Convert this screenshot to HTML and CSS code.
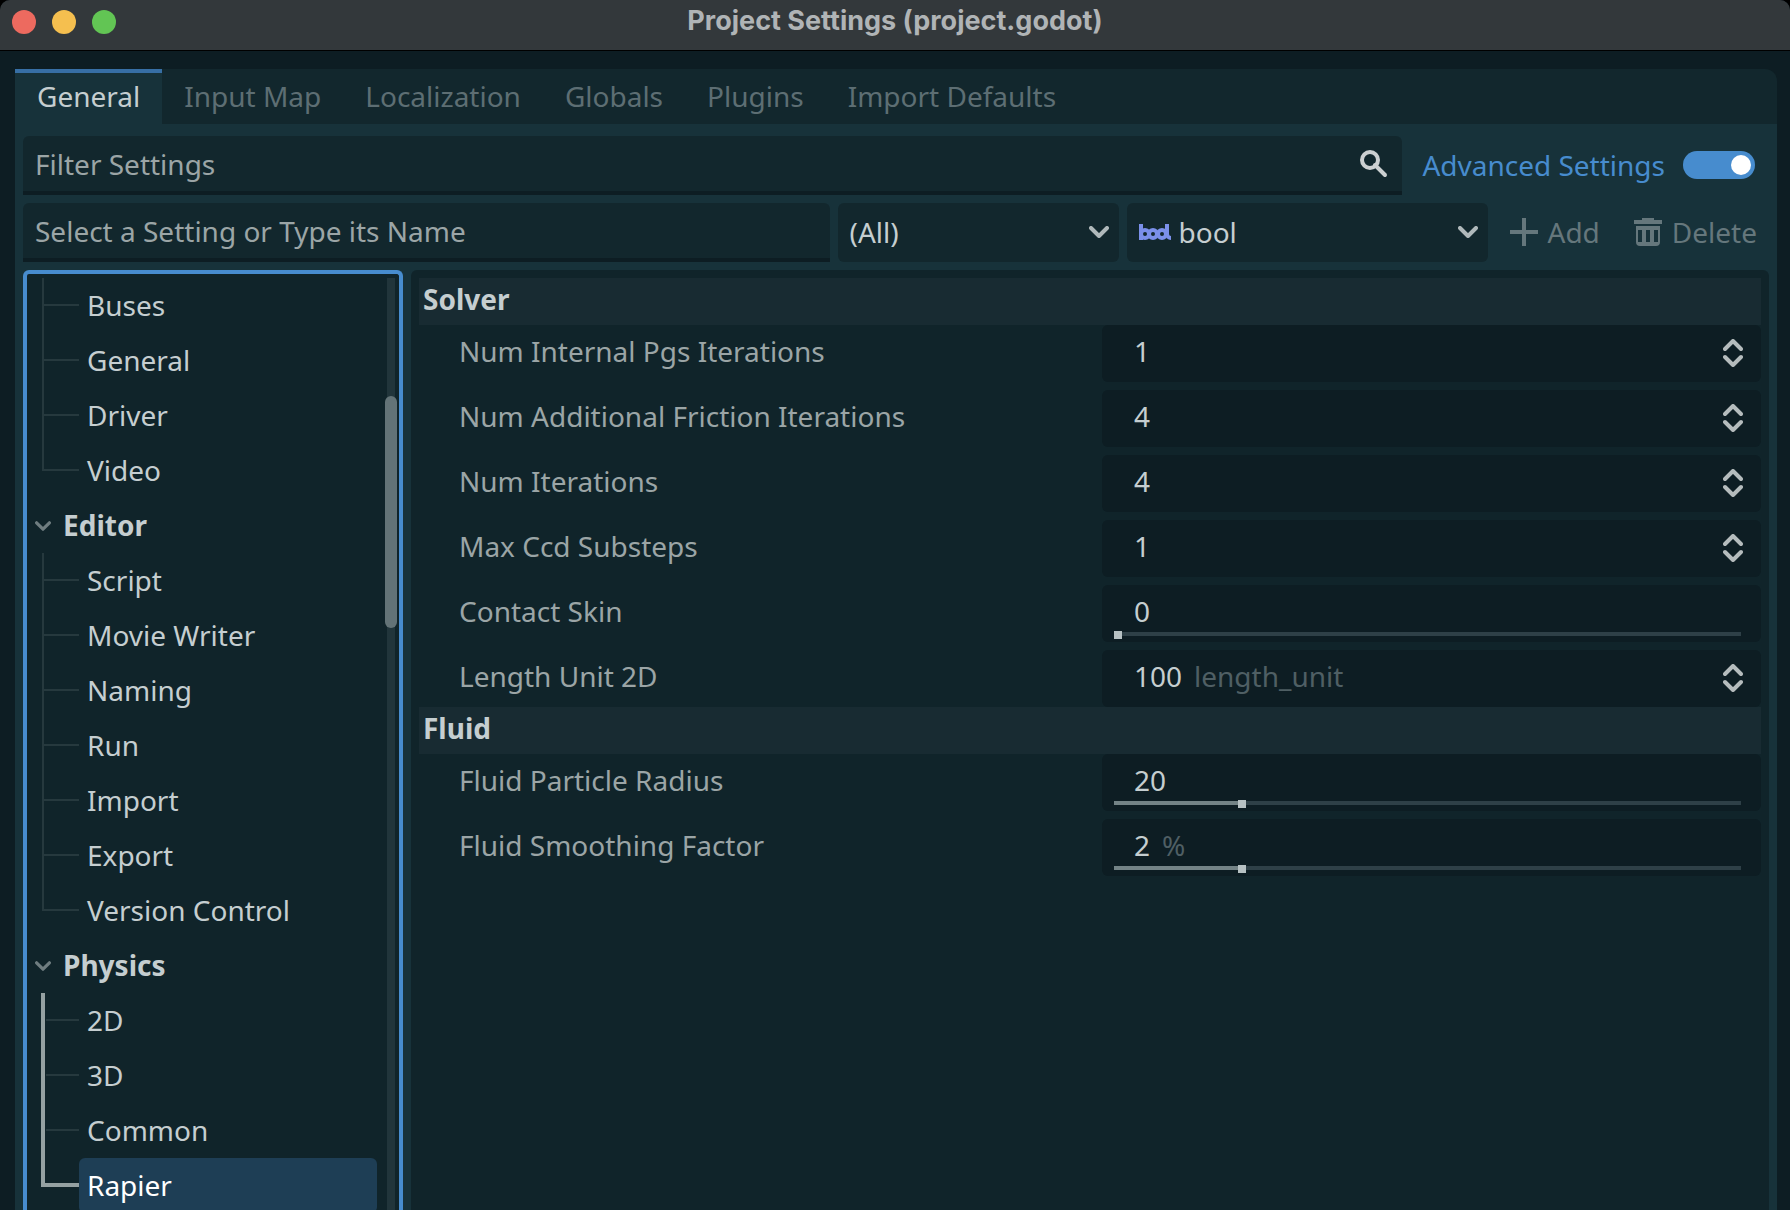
FILE: index.html
```html
<!DOCTYPE html>
<html lang="en">
<head>
<meta charset="utf-8">
<title>Project Settings (project.godot)</title>
<link rel="stylesheet" href="styles.css">
</head>
<body>
<svg class="sprite" aria-hidden="true">
  <symbol id="chevron" viewBox="0 0 20 12"><path d="M2 2l8 8 8-8" fill="none" stroke="currentColor" stroke-width="4" stroke-linecap="round" stroke-linejoin="round"/></symbol>
  <symbol id="updown" viewBox="0 0 20 28"><path d="M2 10l8-8 8 8M2 18l8 8 8-8" fill="none" stroke="currentColor" stroke-width="4" stroke-linecap="round" stroke-linejoin="round"/></symbol>
</svg>
<div class="window">
  <header class="titlebar">
    <div class="lights">
      <button class="light close" aria-label="Close"></button>
      <button class="light minimize" aria-label="Minimize"></button>
      <button class="light maximize" aria-label="Zoom"></button>
    </div>
    <h1 class="title">Project Settings (project.godot)</h1>
  </header>

  <main class="dialog">
    <nav class="tabs" role="tablist">
      <button class="tab active" role="tab" aria-selected="true">General</button>
      <button class="tab" role="tab">Input Map</button>
      <button class="tab" role="tab">Localization</button>
      <button class="tab" role="tab">Globals</button>
      <button class="tab" role="tab">Plugins</button>
      <button class="tab" role="tab">Import Defaults</button>
    </nav>

    <div class="page">
      <div class="toolbar">
        <div class="textbox">
          <input type="text" placeholder="Filter Settings" aria-label="Filter Settings">
          <svg class="search" viewBox="0 0 28 28"><circle cx="10" cy="10" r="8" fill="none" stroke="currentColor" stroke-width="4"/><path d="M15 15L25 25" stroke="currentColor" stroke-width="4" stroke-linecap="round"/></svg>
        </div>
        <label class="advanced">Advanced Settings <input class="toggle" type="checkbox" checked></label>
      </div>

      <div class="toolbar">
        <div class="textbox">
          <input type="text" placeholder="Select a Setting or Type its Name" aria-label="Setting name">
        </div>
        <div class="dropdown feature">
          <select aria-label="Feature"><option>(All)</option></select>
          <svg class="arrow"><use href="#chevron"/></svg>
        </div>
        <div class="dropdown type">
          <svg class="type-icon" viewBox="0 0 32 16"><g fill="none" stroke="#7b90ea" stroke-width="4"><path d="M2 0v16M28 0v10a4 4 0 0 0 4 4"/><circle cx="6" cy="10" r="4"/><circle cx="14" cy="10" r="4"/><circle cx="23" cy="10" r="4"/></g></svg>
          <select aria-label="Type"><option>bool</option></select>
          <svg class="arrow"><use href="#chevron"/></svg>
        </div>
        <button class="action" disabled><svg viewBox="0 0 28 28"><path d="M12 0h4v12h12v4H16v12h-4V16H0v-4h12z" fill="currentColor"/></svg>Add</button>
        <button class="action" disabled><svg viewBox="0 0 28 28"><path fill-rule="evenodd" d="M8 0h12v2h8v4H0V2h8zM2 8h24v16a4 4 0 0 1-4 4H6a4 4 0 0 1-4-4zM4 12v12h4V12zM12 12v12h4V12zM20 12v12h4V12z" fill="currentColor"/></svg>Delete</button>
      </div>

      <div class="split">
        <section class="tree" aria-label="Sections">
          <div class="tree-body">
            <ul class="branch">
              <li><a href="#">Buses</a></li>
              <li><a href="#">General</a></li>
              <li><a href="#">Driver</a></li>
              <li><a href="#">Video</a></li>
            </ul>
            <h2 class="group"><svg><use href="#chevron"/></svg>Editor</h2>
            <ul class="branch">
              <li><a href="#">Script</a></li>
              <li><a href="#">Movie Writer</a></li>
              <li><a href="#">Naming</a></li>
              <li><a href="#">Run</a></li>
              <li><a href="#">Import</a></li>
              <li><a href="#">Export</a></li>
              <li><a href="#">Version Control</a></li>
            </ul>
            <h2 class="group"><svg><use href="#chevron"/></svg>Physics</h2>
            <ul class="branch current">
              <li><a href="#">2D</a></li>
              <li><a href="#">3D</a></li>
              <li><a href="#">Common</a></li>
              <li><a href="#" class="selected">Rapier</a></li>
            </ul>
          </div>
          <div class="scrollbar"><div class="thumb"></div></div>
        </section>

        <section class="inspector">
          <h2 class="heading">Solver</h2>
          <div class="properties">
            <div class="property"><label for="pgs">Num Internal Pgs Iterations</label><div class="field"><input id="pgs" class="number" type="text" value="1"><svg class="spin"><use href="#updown"/></svg></div></div>
            <div class="property"><label for="friction">Num Additional Friction Iterations</label><div class="field"><input id="friction" class="number" type="text" value="4"><svg class="spin"><use href="#updown"/></svg></div></div>
            <div class="property"><label for="iterations">Num Iterations</label><div class="field"><input id="iterations" class="number" type="text" value="4"><svg class="spin"><use href="#updown"/></svg></div></div>
            <div class="property"><label for="ccd">Max Ccd Substeps</label><div class="field"><input id="ccd" class="number" type="text" value="1"><svg class="spin"><use href="#updown"/></svg></div></div>
            <div class="property"><label for="skin">Contact Skin</label><div class="field"><input id="skin" class="number" type="text" value="0"><input class="slider" type="range" value="0" style="--fill: 0%" aria-label="Contact Skin slider"></div></div>
            <div class="property"><label for="unit">Length Unit 2D</label><div class="field"><input id="unit" class="number digits-3" type="text" value="100"><span class="unit">length_unit</span><svg class="spin"><use href="#updown"/></svg></div></div>
          </div>
          <h2 class="heading">Fluid</h2>
          <div class="properties">
            <div class="property"><label for="radius">Fluid Particle Radius</label><div class="field"><input id="radius" class="number" type="text" value="20"><input class="slider" type="range" value="20" style="--fill: 20%" aria-label="Fluid Particle Radius slider"></div></div>
            <div class="property"><label for="smoothing">Fluid Smoothing Factor</label><div class="field"><input id="smoothing" class="number digits-1" type="text" value="2"><span class="unit">%</span><input class="slider" type="range" value="20" style="--fill: 20%" aria-label="Fluid Smoothing Factor slider"></div></div>
          </div>
        </section>
      </div>
    </div>
  </main>
</div>
</body>
</html>
```

FILE: styles.css
```css
:root {
  --base: #0d1d23;
  --panel: #17323a;
  --sunken: #12272d;
  --well: #10242a;
  --accent: #478cce;
  --text: #c5ced0;
  --muted: #9ba5a6;
  --faint: #5d6e73;
}

* { box-sizing: border-box; }

body {
  margin: 0;
  background: #000;
  color: var(--text);
  font: 28px/38px "Noto Sans", sans-serif;
}

button, input, select {
  margin: 0;
  padding: 0;
  border: 0;
  background: none;
  color: inherit;
  font: inherit;
}

h1, h2, ul { margin: 0; padding: 0; font-size: inherit; }
a { color: inherit; text-decoration: none; }
.sprite { display: none; }

.window {
  display: flex;
  flex-direction: column;
  height: 100vh;
  overflow: hidden;
  background: var(--base);
  border-radius: 10px 10px 0 0;
}

/* Title bar */
.titlebar {
  display: grid;
  grid-template-columns: 1fr auto 1fr;
  flex: none;
  height: 51px;
  padding: 0 12px;
  background: #33383b;
  border-bottom: 1px solid #000;
}

.lights { display: flex; gap: 16px; padding-top: 10px; }
.light { width: 24px; height: 24px; border-radius: 50%; }
.close { background: #ed6a5f; }
.minimize { background: #f5bf4f; }
.maximize { background: #62c554; }

.title {
  color: #b0b4b6;
  font: bold 27px/42px Inter, sans-serif;
}

/* Tabs */
.dialog {
  display: flex;
  flex: 1;
  flex-direction: column;
  min-height: 0;
  margin: 18px 13px 0 15px;
}

.tabs {
  display: flex;
  flex: none;
  height: 55px;
  background: var(--sunken);
  border-radius: 0 12px 0 0;
}

.tab {
  padding: 0 22px 6px;
  border-top: 4px solid transparent;
  color: var(--faint);
}

.tab.active {
  background: var(--panel);
  border-color: #376fa5;
  color: var(--text);
}

.page {
  display: flex;
  flex: 1;
  flex-direction: column;
  gap: 8px;
  min-height: 0;
  padding: 12px 8px 0;
  background: var(--panel);
}

/* Toolbars */
.toolbar { display: flex; flex: none; gap: 8px; height: 59px; }

.textbox {
  display: flex;
  flex: 1;
  min-width: 0;
  align-items: center;
  padding: 0 14px 0 12px;
  background: var(--sunken);
  border-bottom: 4px solid var(--base);
  border-radius: 6px 6px 0 0;
}

.textbox input { flex: 1; min-width: 0; height: 38px; outline: 0; }
.textbox input::placeholder { color: var(--muted); opacity: 1; }
.search { width: 28px; height: 28px; color: #ccd0d1; }

.advanced {
  display: flex;
  align-items: center;
  gap: 18px;
  padding: 0 14px 2px 12px;
  color: var(--accent);
}

.toggle {
  appearance: none;
  display: flex;
  align-items: center;
  justify-content: flex-end;
  width: 72px;
  height: 28px;
  padding: 0 4px;
  background: var(--accent);
  border-radius: 14px;
}

.toggle::before {
  content: "";
  width: 20px;
  height: 20px;
  background: #fff;
  border-radius: 50%;
}

.dropdown { position: relative; display: flex; background: var(--sunken); border-radius: 6px; }
.dropdown select { appearance: none; flex: 1; padding: 0 40px 2px 12px; outline: 0; }
.feature { width: 281px; }
.type { width: 361px; }
.dropdown.type select { padding-left: 52px; }
.arrow {
  position: absolute;
  top: 23px;
  right: 10px;
  width: 20px;
  height: 12px;
  color: #b0b9bb;
  pointer-events: none;
}
.type-icon { position: absolute; top: 21px; left: 12px; width: 32px; height: 16px; pointer-events: none; }

.action {
  display: flex;
  align-items: center;
  gap: 10px;
  padding: 0 12px 2px 14px;
  color: #65777c;
}
.action svg { width: 28px; height: 28px; }

/* Section tree */
.split { display: flex; flex: 1; gap: 8px; min-height: 0; }

.tree {
  display: flex;
  flex: none;
  width: 380px;
  padding: 4px 2px 0 8px;
  background: var(--well);
  border: 4px solid var(--accent);
  border-bottom: 0;
  border-radius: 6px 6px 0 0;
}

.tree-body { flex: 1; overflow: hidden; }

.group {
  display: flex;
  align-items: center;
  gap: 12px;
  height: 55px;
  font-weight: bold;
  line-height: 55px;
}
.group svg { width: 16px; height: 10px; color: #6f7d80; }

.branch { --line: #26393e; list-style: none; }

.branch li {
  height: 55px;
  padding-left: 7px;
  background:
    linear-gradient(var(--line), var(--line)) 9px 26px / 35px 2px no-repeat,
    linear-gradient(var(--line), var(--line)) 7px 0 / 2px 100% no-repeat;
}
.branch li:last-child {
  background:
    linear-gradient(var(--line), var(--line)) 9px 26px / 35px 2px no-repeat,
    linear-gradient(var(--line), var(--line)) 7px 0 / 2px 28px no-repeat;
}

.current { --trunk: #95a1a2; }
.current li {
  background:
    linear-gradient(var(--line), var(--line)) 11px 26px / 33px 2px no-repeat,
    linear-gradient(var(--trunk), var(--trunk)) 6px 0 / 4px 100% no-repeat;
}
.current li:last-child {
  background:
    linear-gradient(var(--trunk), var(--trunk)) 6px 25px / 38px 4px no-repeat,
    linear-gradient(var(--trunk), var(--trunk)) 6px 0 / 4px 29px no-repeat;
}

.branch a {
  display: block;
  margin: 0 8px 0 37px;
  padding-left: 8px;
  border-radius: 6px;
  line-height: 55px;
}
.branch .selected { background: #1e3e55; color: #fff; }

.scrollbar {
  flex: none;
  width: 12px;
  padding-top: 118px;
  background: linear-gradient(#21353b, #21353b) center / 8px 100% no-repeat;
}
.thumb { height: 232px; background: #637377; border-radius: 6px; }

/* Inspector */
.inspector {
  flex: 1;
  min-width: 0;
  padding: 8px 8px 0;
  background: var(--well);
  border-radius: 6px 6px 0 0;
}

.heading {
  height: 47px;
  padding-left: 4px;
  background: #182b32;
  font-weight: bold;
  line-height: 42px;
}

.properties { display: grid; gap: 8px; }

.property {
  display: grid;
  grid-template-columns: 1fr 1fr;
  padding-left: 24px;
  line-height: 52px;
}
.property label { padding-left: 16px; color: var(--muted); }

.field {
  position: relative;
  display: flex;
  align-items: flex-start;
  height: 57px;
  padding: 0 18px 0 32px;
  background: var(--base);
  border-radius: 6px;
}
.number { flex: 1; min-width: 0; height: 52px; outline: 0; }
.number.digits-1 { flex: none; width: 1ch; }
.number.digits-3 { flex: none; width: 3ch; }
.unit { flex: 1; padding-left: 12px; color: #4f5f64; }
.spin { width: 20px; height: 28px; margin-top: 14px; color: #b5bcbd; }

.slider {
  position: absolute;
  right: 20px;
  bottom: 3px;
  left: 12px;
  appearance: none;
  height: 8px;
  background: linear-gradient(90deg, #738386 var(--fill), #2e4047 var(--fill)) 0 1px / 100% 4px no-repeat;
}
.slider::-webkit-slider-thumb {
  appearance: none;
  width: 8px;
  height: 8px;
  background: #b6c1c3;
}
```
